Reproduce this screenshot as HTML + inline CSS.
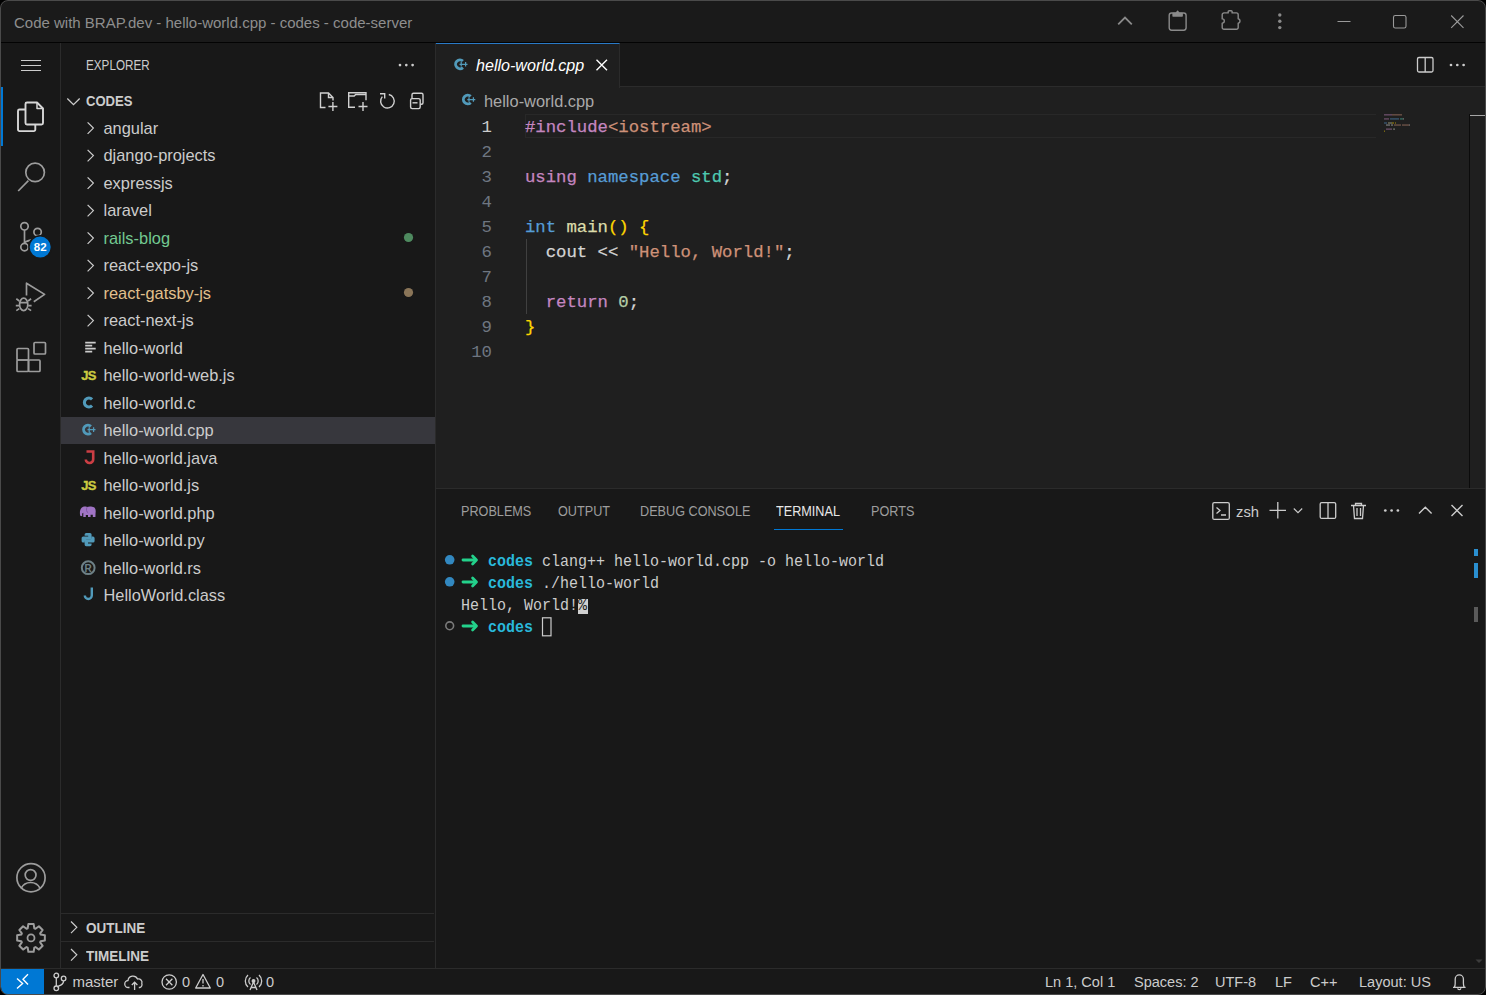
<!DOCTYPE html>
<html><head><meta charset="utf-8">
<style>
*{margin:0;padding:0;box-sizing:border-box}
html,body{width:1486px;height:995px;overflow:hidden;background:#000;font-family:"Liberation Sans",sans-serif}
.a{position:absolute}
#win{position:absolute;left:0;top:0;width:1486px;height:995px;border-radius:8px 8px 8px 8px;overflow:hidden;background:#181818}
#frame{position:absolute;left:0;top:0;width:1486px;height:995px;border:1px solid #4a4a4a;border-radius:8px 8px 8px 8px;pointer-events:none}
#title{left:0;top:0;width:1486px;height:42px;background:#1a1a1a}
#title .t{left:14px;top:13.5px;font-size:15px;color:#8e8e8e;white-space:nowrap}
#tline{left:0;top:41.5px;width:1486px;height:1.5px;background:#030303}
#act{left:0;top:42px;width:60px;height:926px;background:#181818}
#side{left:60px;top:42px;width:376px;height:926px;background:#181818;border-right:1px solid #2b2b2b}
#editor{left:435px;top:42px;width:1050px;height:446px;background:#1f1f1f}
#tabs{left:435px;top:42px;width:1050px;height:44px;background:#181818;border-bottom:1px solid #2b2b2b}
#panel{left:435px;top:488px;width:1051px;height:480px;background:#181818;border-top:1px solid #2b2b2b}
#status{left:0;top:968px;width:1486px;height:27px;background:#181818;border-top:1px solid #2b2b2b}
.ui{font-size:16.25px;color:#cccccc;white-space:nowrap}
.mono{font-family:"Liberation Mono",monospace;white-space:pre}
svg{position:absolute;overflow:visible}
.cl{left:90px;height:25px;line-height:25px;font-size:17.3px;margin-top:1px;-webkit-text-stroke:0.25px}
.ln{left:0;width:57px;text-align:right;height:25px;line-height:25px;font-size:17.4px;color:#6e7681;margin-top:1px}
.pt{top:15px;font-size:13.75px;line-height:16px;color:#9d9d9d;white-space:nowrap;transform:scaleX(0.92);transform-origin:0 0}
.tl{left:25.5px;height:22px;line-height:22px;font-size:16.5px;color:#cccccc;transform:scaleX(0.909);transform-origin:0 0}
.st{top:4px;font-size:15.3px;line-height:18px;color:#cccccc;white-space:nowrap;transform:scaleX(0.95);transform-origin:0 0}
.row{left:43.5px;height:27.5px;line-height:27.5px;font-size:16.4px;white-space:nowrap}
</style></head><body>
<div id="win">
  <div id="title" class="a"><div class="t a">Code with BRAP.dev - hello-world.cpp - codes - code-server</div>
    <svg width="1486" height="42" style="left:0;top:0" fill="none" stroke="#8a8a8a" stroke-width="1.4">
      <path d="M1118.2 24.3 L1125 17.5 L1131.8 24.3" stroke-width="1.8"/>
      <rect x="1169.2" y="13" width="16.9" height="17.2" rx="2.4"/>
      <path d="M1173 16 v-2.6 h2.9 l1.7 -2.3 l1.7 2.3 h2.9 v2.6 z" fill="#8a8a8a" stroke-width="1.3" stroke-linejoin="round"/>
      <path d="M1224 12.9 H1228.2 v-1.3 a0.9 0.9 0 0 1 0.9 -0.9 h2.1 a0.9 0.9 0 0 1 0.9 0.9 v1.3 H1236.4 a1.8 1.8 0 0 1 1.8 1.8 V18.7 a2.3 2.3 0 0 1 0 4.5 V27.4 a1.8 1.8 0 0 1 -1.8 1.8 H1224 a1.8 1.8 0 0 1 -1.8 -1.8 V23.1 a2.1 2.1 0 0 0 0 -4.2 V14.7 a1.8 1.8 0 0 1 1.8 -1.8 Z" stroke-linejoin="round"/>
      <circle cx="1279.8" cy="15" r="1.7" fill="#8a8a8a" stroke="none"/>
      <circle cx="1279.8" cy="21.3" r="1.7" fill="#8a8a8a" stroke="none"/>
      <circle cx="1279.8" cy="27.6" r="1.7" fill="#8a8a8a" stroke="none"/>
      <path d="M1337.5 21.5 h13" stroke-width="1.1" stroke="#9a9a9a"/>
      <rect x="1393.5" y="15.5" width="12.5" height="12.5" rx="1.8" stroke-width="1.1" stroke="#9a9a9a"/>
      <path d="M1451.2 15.5 L1463.5 27.8 M1463.5 15.5 L1451.2 27.8" stroke-width="1.1" stroke="#9a9a9a"/>
    </svg>
  </div>
  <div id="act" class="a">
    <div class="a" style="left:0;top:45px;width:3px;height:59px;background:#0078d4"></div>
    <svg width="60" height="926" style="left:0;top:0" fill="none" stroke="#9c9c9c" stroke-width="1.7">
      <path d="M21 18.5 h20 M21 23.5 h20 M21 28.5 h20" stroke="#cccccc" stroke-width="1.2"/>
      <g stroke="#d7d7d7" stroke-width="1.9" stroke-linejoin="round">
        <path d="M25.5 67.5 h-6 a1.5 1.5 0 0 0 -1.5 1.5 v18.6 a1.5 1.5 0 0 0 1.5 1.5 h14.3 a1.5 1.5 0 0 0 1.5 -1.5 v-5"/>
        <path d="M27 60.5 h10 l6 6 v14.5 a1.5 1.5 0 0 1 -1.5 1.5 h-14.5 a1.5 1.5 0 0 1 -1.5 -1.5 v-19 a1.5 1.5 0 0 1 1.5 -1.5 z"/>
        <path d="M37 60.5 v6 h6" stroke-width="1.5"/>
      </g>
      <circle cx="35.1" cy="130.4" r="9.3"/>
      <path d="M18.2 149 L28.4 138.6"/>
      <g stroke-width="1.7">
        <circle cx="24.5" cy="184.3" r="3.7"/>
        <circle cx="37.6" cy="190" r="3.7"/>
        <circle cx="24.5" cy="205.1" r="3.7"/>
        <path d="M24.5 188 v13.4 M24.8 200.5 c2 -1.5 5 -2.2 8.5 -2.8"/>
      </g>
      <circle cx="40.2" cy="205.1" r="11.3" fill="#0078d4" stroke="#181818" stroke-width="1.6"/>
      <text x="40.2" y="209.3" fill="#ffffff" stroke="none" font-size="11.5" font-weight="bold" text-anchor="middle" font-family="Liberation Sans">82</text>
      <g stroke-width="1.7">
        <path d="M26.5 253.5 V241.2 L44.6 252.4 L33.8 259.8" stroke-linejoin="round"/>
        <ellipse cx="23.7" cy="262.4" rx="4.1" ry="6.2"/>
        <path d="M19.6 260.7 h8.2 M16.3 256.8 l3 2.2 M31.1 256.8 l-3 2.2 M15.8 263.6 h3.4 M28.2 263.6 h3.4 M16.3 268.6 l3 -2 M31.1 268.6 l-3 -2"/>
      </g>
      <g stroke-width="1.7">
        <rect x="17" y="306.5" width="11.5" height="11.5" rx="1"/>
        <rect x="17" y="318" width="11.5" height="11.5" rx="1"/>
        <rect x="28.5" y="318" width="11.5" height="11.5" rx="1"/>
        <rect x="34" y="300.5" width="11.5" height="11.5" rx="1"/>
      </g>
      <g stroke-width="1.7"><circle cx="31" cy="835.7" r="14.1"/>
      <circle cx="30.6" cy="833" r="5.4"/>
      <path d="M21 846.5 c2 -4 5.5 -6 9.6 -6 c4.1 0 7.6 2 9.6 6"/></g>
      <path d="M27.69 886.25 L28.34 882.05 L33.66 882.05 L34.31 886.25 L35.49 886.74 L38.91 884.23 L42.67 887.99 L40.16 891.41 L40.65 892.59 L44.85 893.24 L44.85 898.56 L40.65 899.21 L40.16 900.39 L42.67 903.81 L38.91 907.57 L35.49 905.06 L34.31 905.55 L33.66 909.75 L28.34 909.75 L27.69 905.55 L26.51 905.06 L23.09 907.57 L19.33 903.81 L21.84 900.39 L21.35 899.21 L17.15 898.56 L17.15 893.24 L21.35 892.59 L21.84 891.41 L19.33 887.99 L23.09 884.23 L26.51 886.74 Z" stroke-linejoin="round" stroke-width="2"/>
      <circle cx="31" cy="895.9" r="3.5" stroke-width="1.8"/>
    </svg>
  </div>
  <div id="side" class="a">
    <div class="a" style="left:1px;top:374.5px;width:375px;height:27.5px;background:#37373d"></div>
    <svg width="375" height="926" style="left:0;top:0" fill="none" stroke="#cccccc" stroke-width="1.3">
      <circle cx="340" cy="23.1" r="1.35" fill="#cccccc" stroke="none"/>
      <circle cx="346.3" cy="23.1" r="1.35" fill="#cccccc" stroke="none"/>
      <circle cx="352.6" cy="23.1" r="1.35" fill="#cccccc" stroke="none"/>
      <path d="M7.3 56.5 l6.2 6.2 l6.2 -6.2"/>
      <g stroke-width="1.4" stroke="#d0d0d0">
        <path d="M265.5 65.5 h-5 v-14.5 h8 l4.5 4.5 v3 M268.5 51 v4.5 h4.5"/>
        <path d="M272.9 60 v9 M268.4 64.5 h9"/>
        <path d="M295 65.2 h-6.3 v-14.5 h17.3 v7.5"/>
        <path d="M288.7 54 h5.5 l1.5 -1.5 h10.3"/>
        <path d="M303 60 v9 M298.5 64.5 h9"/>
        <path d="M328.81 52.55 A6.8 6.8 0 1 1 322.35 54.65"/>
        <path d="M320 51.8 H324.7 V56.4"/>
        <rect x="350.6" y="56.6" width="9.6" height="10" rx="1.5"/>
        <path d="M353.5 51.3 h8 a1.5 1.5 0 0 1 1.5 1.5 v8 a1.5 1.5 0 0 1 -1.5 1.5 h-1.3 M353.5 51.3 a1.5 1.5 0 0 0 -1.5 1.5 v3.8"/>
        <path d="M352.5 60.8 h5"/>
      </g>
      <g stroke-width="1.2"><path d="M27.6 80.30 l5.8 5.8 l-5.8 5.8"/><path d="M27.6 107.80 l5.8 5.8 l-5.8 5.8"/><path d="M27.6 135.30 l5.8 5.8 l-5.8 5.8"/><path d="M27.6 162.80 l5.8 5.8 l-5.8 5.8"/><path d="M27.6 190.30 l5.8 5.8 l-5.8 5.8"/><path d="M27.6 217.80 l5.8 5.8 l-5.8 5.8"/><path d="M27.6 245.30 l5.8 5.8 l-5.8 5.8"/><path d="M27.6 272.80 l5.8 5.8 l-5.8 5.8"/></g>
      <g stroke="#cccccc" stroke-width="1.6">
        <path d="M25.2 300.6 h10.5 M25.2 303.6 h7 M25.2 306.6 h10.5 M25.2 309.6 h7"/>
      </g>
      <text x="21.3" y="338.2" font-family="Liberation Sans" font-weight="bold" font-size="13" fill="#cbcb41" stroke="#cbcb41" stroke-width="0.35" letter-spacing="-0.8">JS</text>
      <path d="M32.08 357.32 A4.5 4.5 0 1 0 32.08 363.68" stroke="#519aba" stroke-width="3.1"/>
      <path d="M30.94 384.33 A4.4 4.4 0 1 0 30.94 390.87" stroke="#519aba" stroke-width="2.9"/><path d="M27.50 387.6 H35.50 M29.20 385.30 v4.6 M33.60 385.30 v4.6" stroke="#519aba" stroke-width="1.25"/>
      <path d="M26.5 409.5 H33.2 V417.2 a3.7 3.7 0 0 1 -7.4 0.3" stroke="#cc3e44" stroke-width="2.6"/>
      <text x="21.3" y="447.8" font-family="Liberation Sans" font-weight="bold" font-size="13" fill="#cbcb41" stroke="#cbcb41" stroke-width="0.35" letter-spacing="-0.8">JS</text>
      <path d="M20.2 473.8 C19.6 471 19.8 467.6 21.6 465.8 C23 464.4 25.5 464.3 27 464.9 C28.5 464.2 32 464.1 34 465.3 C35.6 466.3 35.9 468.5 35.6 470.5 L35.4 475 H32.8 V472.8 H30.6 V475 H28 V473 H25.8 V475 H23.3 V470.8 C22.6 471 22.2 471.6 22.2 472.5 V474.2 Z" fill="#a074c4" stroke="none"/><path d="M27 465.2 C26 467.5 26.5 470 28.2 471" stroke="#7a52a0" stroke-width="0.9"/>
      <g transform="translate(21.6 490.9)" fill="#519aba" stroke="none"><path d="M4.6 0 H8.4 A1.6 1.6 0 0 1 10 1.6 V5.2 A1.6 1.6 0 0 1 8.4 6.8 H4.8 A1.6 1.6 0 0 0 3.2 8.4 V9.6 H1.6 A1.6 1.6 0 0 1 0 8 V5.2 A1.6 1.6 0 0 1 1.6 3.6 H6.6 V2.8 H3 V1.6 A1.6 1.6 0 0 1 4.6 0 Z"/><path d="M4.6 0 H8.4 A1.6 1.6 0 0 1 10 1.6 V5.2 A1.6 1.6 0 0 1 8.4 6.8 H4.8 A1.6 1.6 0 0 0 3.2 8.4 V9.6 H1.6 A1.6 1.6 0 0 1 0 8 V5.2 A1.6 1.6 0 0 1 1.6 3.6 H6.6 V2.8 H3 V1.6 A1.6 1.6 0 0 1 4.6 0 Z" transform="rotate(180 6.5 6.65)"/></g>
      
      <circle cx="28.2" cy="525.7" r="6.4" stroke="#6d8086" stroke-width="2"/>
      <text x="28.2" y="530" font-family="Liberation Sans" font-weight="bold" font-size="10" fill="#6d8086" stroke="none" text-anchor="middle">R</text>
      <path d="M31.8 545.5 v8 a3.5 3.5 0 0 1 -7 0" stroke="#519aba" stroke-width="2.4"/>
      <circle cx="348.5" cy="195.5" r="4.6" fill="#4e8a5f" stroke="none"/>
      <circle cx="348.5" cy="250.5" r="4.6" fill="#8a7558" stroke="none"/>
    </svg>
    <div class="a ui" style="left:26px;top:15.5px;font-size:13.75px;line-height:16px;transform:scaleX(0.85);transform-origin:0 0">EXPLORER</div>
    <div class="a ui" style="left:26px;top:51.5px;font-size:13.75px;font-weight:bold;line-height:16px;transform:scaleX(0.95);transform-origin:0 0">CODES</div>
    <div class="row a" style="top:72.75px;color:#cccccc">angular</div>
    <div class="row a" style="top:100.25px;color:#cccccc">django-projects</div>
    <div class="row a" style="top:127.75px;color:#cccccc">expressjs</div>
    <div class="row a" style="top:155.25px;color:#cccccc">laravel</div>
    <div class="row a" style="top:182.75px;color:#73c991">rails-blog</div>
    <div class="row a" style="top:210.25px;color:#cccccc">react-expo-js</div>
    <div class="row a" style="top:237.75px;color:#e2c08d">react-gatsby-js</div>
    <div class="row a" style="top:265.25px;color:#cccccc">react-next-js</div>
    <div class="row a" style="top:292.75px;color:#cccccc">hello-world</div>
    <div class="row a" style="top:320.25px;color:#cccccc">hello-world-web.js</div>
    <div class="row a" style="top:347.75px;color:#cccccc">hello-world.c</div>
    <div class="row a" style="top:375.25px;color:#cccccc">hello-world.cpp</div>
    <div class="row a" style="top:402.75px;color:#cccccc">hello-world.java</div>
    <div class="row a" style="top:430.25px;color:#cccccc">hello-world.js</div>
    <div class="row a" style="top:457.75px;color:#cccccc">hello-world.php</div>
    <div class="row a" style="top:485.25px;color:#cccccc">hello-world.py</div>
    <div class="row a" style="top:512.75px;color:#cccccc">hello-world.rs</div>
    <div class="row a" style="top:540.25px;color:#cccccc">HelloWorld.class</div>
  
    <div class="a" style="left:0;top:871px;width:374px;height:1px;background:#2b2b2b"></div>
    <div class="a" style="left:0;top:899px;width:374px;height:1px;background:#2b2b2b"></div>
    <div class="a ui" style="left:26px;top:879px;font-size:13.75px;font-weight:bold;line-height:16px;transform:scaleX(0.98);transform-origin:0 0">OUTLINE</div>
    <div class="a ui" style="left:26px;top:907px;font-size:13.75px;font-weight:bold;line-height:16px;transform:scaleX(0.98);transform-origin:0 0">TIMELINE</div>
    <svg width="20" height="60" style="left:0;top:870px" fill="none" stroke="#cccccc" stroke-width="1.2">
      <path d="M11 9.5 l5.8 5.8 l-5.8 5.8 M11 37 l5.8 5.8 l-5.8 5.8"/>
    </svg>
  </div>
  <div id="editor" class="a">
    <div class="a" style="left:0;top:0;width:1050px;height:45px;background:#181818;border-bottom:1px solid #2b2b2b"></div>
    <div class="a" style="left:1px;top:1px;width:184px;height:45px;background:#1f1f1f;border-right:1px solid #2b2b2b;border-top:1px solid #2a7ac6"></div>
    <div class="a ui" style="left:41px;top:14px;font-size:16.1px;line-height:18px;font-style:italic;color:#ffffff">hello-world.cpp</div>
    <div class="a ui" style="left:49px;top:50px;font-size:16.4px;line-height:18px;color:#a9a9a9">hello-world.cpp</div>
    <svg width="1050" height="446" style="left:0;top:0" fill="none" stroke="#cccccc" stroke-width="1.3">
      <path d="M161.5 17.7 L172 28.2 M172 17.7 L161.5 28.2" stroke="#ffffff" stroke-width="1.4"/>
      <path d="M27.94 19.03 A4.4 4.4 0 1 0 27.94 25.57" stroke="#519aba" stroke-width="2.9"/><path d="M24.50 22.3 H32.50 M26.20 20.00 v4.6 M30.60 20.00 v4.6" stroke="#519aba" stroke-width="1.25"/>
      <path d="M35.74 54.23 A4.4 4.4 0 1 0 35.74 60.77" stroke="#519aba" stroke-width="2.9"/><path d="M32.30 57.5 H40.30 M34.00 55.20 v4.6 M38.40 55.20 v4.6" stroke="#519aba" stroke-width="1.25"/>
      <rect x="982.5" y="15.5" width="15.5" height="14.5" rx="1.5" stroke-width="1.3"/>
      <path d="M990.2 15.5 v14.5" stroke-width="1.3"/>
      <circle cx="1016" cy="23" r="1.35" fill="#cccccc" stroke="none"/>
      <circle cx="1022.3" cy="23" r="1.35" fill="#cccccc" stroke="none"/>
      <circle cx="1028.6" cy="23" r="1.35" fill="#cccccc" stroke="none"/>
    </svg>
    <div class="a" style="left:90px;top:72.2px;width:851px;height:24.3px;border:1.5px solid #282828;border-right:none"></div>
    <div class="a" style="left:90.5px;top:196.5px;width:1px;height:75px;background:#404040"></div>
    <svg width="100" height="30" style="left:0;top:0"><rect x="949.00" y="72.00" width="8.00" height="1.6" fill="#c586c0" opacity="0.38"/><rect x="957.00" y="72.00" width="10.00" height="1.6" fill="#ce9178" opacity="0.38"/><rect x="949.00" y="76.10" width="5.00" height="1.6" fill="#c586c0" opacity="0.38"/><rect x="955.00" y="76.10" width="9.00" height="1.6" fill="#569cd6" opacity="0.38"/><rect x="965.00" y="76.10" width="3.00" height="1.6" fill="#4ec9b0" opacity="0.38"/><rect x="968.00" y="76.10" width="1.00" height="1.6" fill="#d4d4d4" opacity="0.38"/><rect x="949.00" y="80.20" width="3.00" height="1.6" fill="#569cd6" opacity="0.38"/><rect x="953.00" y="80.20" width="4.00" height="1.6" fill="#dcdcaa" opacity="0.38"/><rect x="957.00" y="80.20" width="2.00" height="1.6" fill="#ffd700" opacity="0.38"/><rect x="960.00" y="80.20" width="1.00" height="1.6" fill="#ffd700" opacity="0.38"/><rect x="951.00" y="82.25" width="4.00" height="1.6" fill="#d4d4d4" opacity="0.38"/><rect x="956.00" y="82.25" width="2.00" height="1.6" fill="#d4d4d4" opacity="0.38"/><rect x="959.00" y="82.25" width="7.00" height="1.6" fill="#ce9178" opacity="0.38"/><rect x="967.00" y="82.25" width="7.00" height="1.6" fill="#ce9178" opacity="0.38"/><rect x="974.00" y="82.25" width="1.00" height="1.6" fill="#d4d4d4" opacity="0.38"/><rect x="951.00" y="86.35" width="6.00" height="1.6" fill="#c586c0" opacity="0.38"/><rect x="958.00" y="86.35" width="1.00" height="1.6" fill="#b5cea8" opacity="0.38"/><rect x="959.00" y="86.35" width="1.00" height="1.6" fill="#d4d4d4" opacity="0.38"/><rect x="949.00" y="88.40" width="1.00" height="1.6" fill="#ffd700" opacity="0.38"/></svg>
    <div class="a" style="left:1034px;top:72px;width:1px;height:374px;background:#0b0b0b"></div>
    <div class="a" style="left:1035px;top:72.5px;width:15px;height:1.5px;background:#a6a6a6"></div>
    <div class="a mono ln" style="top:71.5px;color:#cccccc">1</div>
    <div class="a mono ln" style="top:96.5px;">2</div>
    <div class="a mono ln" style="top:121.5px;">3</div>
    <div class="a mono ln" style="top:146.5px;">4</div>
    <div class="a mono ln" style="top:171.5px;">5</div>
    <div class="a mono ln" style="top:196.5px;">6</div>
    <div class="a mono ln" style="top:221.5px;">7</div>
    <div class="a mono ln" style="top:246.5px;">8</div>
    <div class="a mono ln" style="top:271.5px;">9</div>
    <div class="a mono ln" style="top:296.5px;">10</div>
    <div class="a mono cl" style="top:71.5px"><span style="color:#c586c0">#include</span><span style="color:#ce9178">&lt;iostream&gt;</span></div>
    <div class="a mono cl" style="top:96.5px"></div>
    <div class="a mono cl" style="top:121.5px"><span style="color:#c586c0">using</span><span style="color:#d4d4d4"> </span><span style="color:#569cd6">namespace</span><span style="color:#d4d4d4"> </span><span style="color:#4ec9b0">std</span><span style="color:#d4d4d4">;</span></div>
    <div class="a mono cl" style="top:146.5px"></div>
    <div class="a mono cl" style="top:171.5px"><span style="color:#569cd6">int</span><span style="color:#d4d4d4"> </span><span style="color:#dcdcaa">main</span><span style="color:#ffd700">()</span><span style="color:#d4d4d4"> </span><span style="color:#ffd700">{</span></div>
    <div class="a mono cl" style="top:196.5px"><span style="color:#d4d4d4">  cout &lt;&lt; </span><span style="color:#ce9178">"Hello, World!"</span><span style="color:#d4d4d4">;</span></div>
    <div class="a mono cl" style="top:221.5px"></div>
    <div class="a mono cl" style="top:246.5px"><span style="color:#d4d4d4">  </span><span style="color:#c586c0">return</span><span style="color:#d4d4d4"> </span><span style="color:#b5cea8">0</span><span style="color:#d4d4d4">;</span></div>
    <div class="a mono cl" style="top:271.5px"><span style="color:#ffd700">}</span></div>
    <div class="a mono cl" style="top:296.5px"></div>
  </div>
    <div id="panel" class="a">
    <div class="a pt" style="left:26px">PROBLEMS</div>
    <div class="a pt" style="left:123px">OUTPUT</div>
    <div class="a pt" style="left:205px">DEBUG CONSOLE</div>
    <div class="a pt" style="left:341px;color:#e7e7e7">TERMINAL</div>
    <div class="a pt" style="left:436px">PORTS</div>
    <div class="a" style="left:339px;top:39.5px;width:69px;height:1.5px;background:#0078d4"></div>
    <div class="a ui" style="left:801px;top:13.5px;font-size:14.8px;line-height:18px">zsh</div>
    <svg width="1050" height="480" style="left:0;top:0" fill="none" stroke="#cccccc" stroke-width="1.3">
      <g transform="translate(0,-2)"><rect x="777.8" y="15.6" width="16.5" height="16.8" rx="1.5"/>
      <path d="M781.5 20.5 l3.5 3 l-3.5 3 M786 28 h5"/>
      <path d="M842.8 15 v16.5 M834.5 23.3 h16.5"/>
      <path d="M858.8 21.5 l4.2 4.2 l4.2 -4.2" stroke-width="1.1"/>
      <rect x="885.2" y="15.6" width="15.5" height="15.8" rx="1.5"/>
      <path d="M893 15.6 v15.8"/>
      <path d="M916 18.5 h15 M920.5 18.5 v-2 h6 v2 M918.5 18.5 l1 13 h8 l1 -13 M922 21 v8 M925.5 21 v8"/>
      <circle cx="950.3" cy="23.5" r="1.35" fill="#cccccc" stroke="none"/>
      <circle cx="956.6" cy="23.5" r="1.35" fill="#cccccc" stroke="none"/>
      <circle cx="962.9" cy="23.5" r="1.35" fill="#cccccc" stroke="none"/>
      <path d="M984 26.5 l6.3 -6.3 l6.3 6.3" stroke-width="1.4"/>
      <path d="M1016.5 18 l11 11 M1027.5 18 l-11 11" stroke-width="1.4"/></g>
      <path d="M28 71.0 h12" stroke="#23d18b" stroke-width="2.8" stroke-linecap="round"/><path d="M37.6 67.1 l3.9 3.9 l-3.9 3.9" stroke="#23d18b" stroke-width="2.8" stroke-linecap="round" stroke-linejoin="round"/><path d="M28 93.0 h12" stroke="#23d18b" stroke-width="2.8" stroke-linecap="round"/><path d="M37.6 89.1 l3.9 3.9 l-3.9 3.9" stroke="#23d18b" stroke-width="2.8" stroke-linecap="round" stroke-linejoin="round"/><path d="M28 137.0 h12" stroke="#23d18b" stroke-width="2.8" stroke-linecap="round"/><path d="M37.6 133.1 l3.9 3.9 l-3.9 3.9" stroke="#23d18b" stroke-width="2.8" stroke-linecap="round" stroke-linejoin="round"/><circle cx="14.7" cy="70.8" r="4.8" fill="#3288c0" stroke="none"/>
      <circle cx="14.7" cy="92.8" r="4.8" fill="#3288c0" stroke="none"/>
      <circle cx="14.7" cy="136.8" r="3.9" stroke="#7a7a7a" stroke-width="1.6"/>
      <rect x="107.5" y="128.8" width="8.5" height="18" stroke="#cccccc" stroke-width="1.2"/>
      <rect x="1039" y="60" width="4" height="7" fill="#2a8fd0" stroke="none"/>
      <rect x="1039" y="74" width="4" height="15" fill="#2a8fd0" stroke="none"/>
      <rect x="1039" y="118" width="4" height="15" fill="#5a5a5a" stroke="none"/>
      <path d="M1040.5 470.5 h7 l-3.5 3.5 z" fill="#3c3c3c" stroke="none"/>
    </svg>
    <div class="a" style="left:143.2px;top:109.8px;width:9.5px;height:15.5px;background:#d0d0d0"></div>
    <div class="a mono tl" style="top:62px"><span style="color:transparent">&gt;</span>  <span style="color:#29b8db;font-weight:bold">codes</span> clang++ hello-world.cpp -o hello-world</div>
    <div class="a mono tl" style="top:84px"><span style="color:transparent">&gt;</span>  <span style="color:#29b8db;font-weight:bold">codes</span> ./hello-world</div>
    <div class="a mono tl" style="top:106px">Hello, World!<span style="color:#1f1f1f">%</span></div>
    <div class="a mono tl" style="top:128px"><span style="color:transparent">&gt;</span>  <span style="color:#29b8db;font-weight:bold">codes</span></div>
  </div>
  <div id="status" class="a">
    <div class="a" style="left:1px;top:0;width:43px;height:26px;background:#0078d4;border-bottom-left-radius:8px"></div>
    <div class="a st" style="left:72.5px;transform:none;font-size:15px">master</div>
    <div class="a st" style="left:181.5px">0</div>
    <div class="a st" style="left:215.5px">0</div>
    <div class="a st" style="left:265.5px">0</div>
    <div class="a st" style="left:1044.5px">Ln 1, Col 1</div>
    <div class="a st" style="left:1133.5px">Spaces: 2</div>
    <div class="a st" style="left:1214.5px">UTF-8</div>
    <div class="a st" style="left:1274.5px">LF</div>
    <div class="a st" style="left:1309.5px">C++</div>
    <div class="a st" style="left:1358.5px">Layout: US</div>
    <svg width="1486" height="27" style="left:0;top:-1px" fill="none" stroke="#cccccc" stroke-width="1.3">
      <path d="M17 10.6 l5.6 5 l-5.6 5 M28 6.3 l-5 5 l5 5.2" stroke="#ffffff" stroke-width="1.4"/>
      <circle cx="56.3" cy="7.5" r="2.3"/>
      <circle cx="56.3" cy="20.3" r="2.3"/>
      <circle cx="63.6" cy="10.5" r="2.3"/>
      <path d="M56.3 9.8 v8.2 M63.6 12.8 c0 4 -3 4.5 -6.5 6"/>
      <path d="M129.5 19.5 h-1 a3.5 3.5 0 0 1 -0.5 -7 a5 5 0 0 1 9.5 -1.5 a3.5 3.5 0 0 1 4.3 4.5 a3 3 0 0 1 -2 4 h-1"/>
      <path d="M134.6 22 v-7.5 M131.8 17 l2.8 -2.8 l2.8 2.8"/>
      <circle cx="169.2" cy="14" r="7.2"/>
      <path d="M166 10.8 l6.4 6.4 M172.4 10.8 l-6.4 6.4"/>
      <path d="M203 6.5 l7.3 13.5 h-14.6 z" stroke-linejoin="round"/>
      <path d="M203 11 v4.5 M203 17 v1.5"/>
      <path d="M250.5 9.5 a4.5 4.5 0 0 0 0 7 M256.5 9.5 a4.5 4.5 0 0 1 0 7 M248 7 a8 8 0 0 0 0 12 M259 7 a8 8 0 0 1 0 12"/>
      <circle cx="253.5" cy="13" r="1.3" fill="#cccccc"/>
      <path d="M253.5 14 l-3.5 8 M253.5 14 l3.5 8 M251 19.5 h5"/>
      <path d="M1453 19.3 h12.6 M1454.3 19.3 c0.8 -1 0.9 -2.5 0.9 -4 v-4.3 a4.1 4.1 0 0 1 8.2 0 v4.3 c0 1.5 0.1 3 0.9 4" stroke-linejoin="round"/><path d="M1457.8 20.2 a1.5 1.5 0 0 0 3 0"/>
    </svg>
  </div>
  <div class="a" style="left:60px;top:42px;width:1px;height:926px;background:#2b2b2b"></div>
  <div class="a" style="left:435px;top:42px;width:1px;height:926px;background:#2b2b2b"></div>
  <div id="tline" class="a"></div>
  <div id="frame"></div>
</div>
</body></html>
